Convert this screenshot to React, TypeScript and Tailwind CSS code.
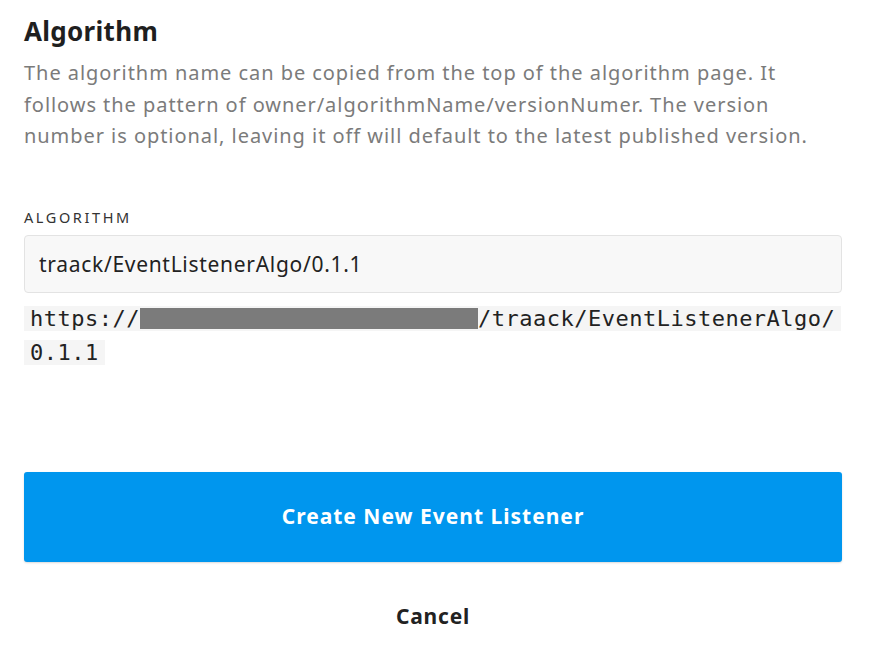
export default function App() {
  return (
    <div
      className="min-h-screen bg-white pl-6 pr-[51px] pt-[13px]"
      style={{ fontFamily: "'Noto Sans', Lato, sans-serif" }}
    >
      <h2 className="text-[26px] font-bold leading-[36px] tracking-[0.3px] text-[#1f1f1f]">Algorithm</h2>
      <p className="mt-[8px] text-[20px] leading-[31.5px] tracking-[0.95px] text-[#7b7b7b]">
        The algorithm name can be copied from the top of the algorithm page. It follows the
        pattern of owner/algorithmName/versionNumer. The version number is optional, leaving it
        off will default to the latest published version.
      </p>

      <label className="mt-[55px] block text-[14.5px] uppercase leading-[20px] tracking-[2.6px] text-[#333]">
        Algorithm
      </label>
      <input
        readOnly
        value="traack/EventListenerAlgo/0.1.1"
        className="mt-[8px] h-[58px] w-full rounded-[4px] border border-[#e3e3e3] bg-[#f8f8f8] px-[14px] text-[21px] tracking-[0.7px] text-[#222] outline-none"
      />

      <div className="mt-[8px] whitespace-nowrap text-[22px] leading-[32px] text-[#222]">
        <code
          className="bg-[#f5f5f5] px-[6px] tracking-[0.5px] [box-decoration-break:clone]"
          style={{ fontFamily: "'DejaVu Sans Mono', 'Liberation Mono', monospace" }}
        >
          https://
          <span className="inline-block h-[21px] w-[338px] align-[-3px] bg-[#7b7b7b]" />
          /traack/EventListenerAlgo/
          <br />
          0.1.1
        </code>
      </div>

      <button className="mt-[103px] flex h-[90px] w-full items-center justify-center rounded-[3px] bg-[#0096ee] text-[21px] font-bold tracking-[1px] text-white shadow-[0_1px_2px_rgba(0,0,0,0.15)]">
        Create New Event Listener
      </button>

      <button className="mx-auto mt-[39px] block text-[21px] font-bold leading-[30px] tracking-[0.8px] text-[#222]">
        Cancel
      </button>
    </div>
  );
}
